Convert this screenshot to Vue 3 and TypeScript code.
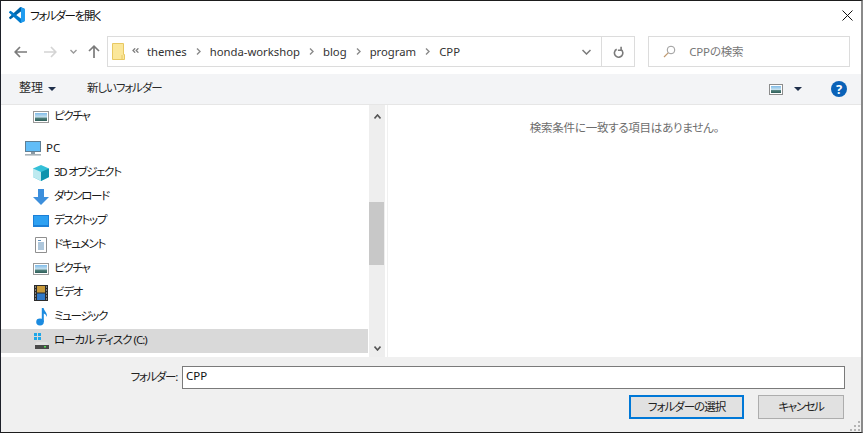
<script setup lang="ts">
const crumbs = ['themes', 'honda-workshop', 'blog', 'program', 'CPP']
</script>

<template>
  <div class="window">
    <header class="title">
      <svg class="logo" width="16" height="16" viewBox="0 0 100 100">
        <path fill="#0065A9" d="M96.4 10.8 75.8.9a6.2 6.2 0 0 0-7.1 1.2L1.3 63.6a4.2 4.2 0 0 0 0 6.2l5.5 5a4.2 4.2 0 0 0 5.3.2l81.2-61.6c2.7-2.1 6.6-.1 6.6 3.3v-.2a6.2 6.2 0 0 0-3.5-5.6z" />
        <path fill="#007ACC" d="M96.4 89.2 75.8 99.1a6.2 6.2 0 0 1-7.1-1.2L1.3 36.4a4.2 4.2 0 0 1 0-6.2l5.5-5a4.2 4.2 0 0 1 5.3-.2l81.2 61.6c2.7 2.1 6.6.1 6.6-3.3v.2a6.2 6.2 0 0 1-3.5 5.6z" />
        <path fill="#1F9CF0" d="M75.8 99.1a6.2 6.2 0 0 1-7.1-1.2c2.3 2.3 6.2.7 6.2-2.6V4.7c0-3.3-3.9-4.9-6.2-2.6a6.2 6.2 0 0 1 7.1-1.2l20.6 9.9a6.2 6.2 0 0 1 3.5 5.6v67.2a6.2 6.2 0 0 1-3.5 5.6z" />
      </svg>
      <span class="title-text">フォルダーを開く</span>
      <svg class="close" width="11" height="11" viewBox="0 0 11 11"><path d="M.5.5 10.5 10.5M10.5.5 .5 10.5" stroke="#111" stroke-width="1" fill="none" /></svg>
    </header>

    <nav class="nav">
      <div class="arrows">
        <svg width="13" height="12" viewBox="0 0 13 12"><path d="M6 1 1.2 6 6 11M1.5 6H13" stroke="#7b7b7b" stroke-width="1.7" fill="none" /></svg>
        <svg class="fwd" width="13" height="12" viewBox="0 0 13 12"><path d="M7 1 11.8 6 7 11M11.5 6H0" stroke="#d4d4d4" stroke-width="1.7" fill="none" /></svg>
        <svg class="down" width="7" height="5" viewBox="0 0 7 5"><path d="M.5 1 3.5 4 6.5 1" stroke="#9a9a9a" stroke-width="1.4" fill="none" /></svg>
        <svg class="up" width="12" height="13" viewBox="0 0 12 13"><path d="M1 6 6 1.2 11 6M6 1.5V13" stroke="#7b7b7b" stroke-width="1.7" fill="none" /></svg>
      </div>
      <div class="address">
        <svg class="folder" width="13" height="17" viewBox="0 0 13 17">
          <path d="M.5.5h11v11h1v5H.5z" fill="#fbe79a" stroke="#e8c862" />
          <path d="M10 12v5" stroke="#e8c862" />
        </svg>
        <svg class="more" width="7" height="5" viewBox="0 0 7 5"><path d="M3.2.3 1 2.5 3.2 4.7M6.4.3 4.2 2.5 6.4 4.7" stroke="#808080" stroke-width="1.3" fill="none" /></svg>
        <template v-for="(c, i) in crumbs" :key="c">
          <span class="crumb">{{ c }}</span>
          <svg v-if="i < crumbs.length - 1" class="sep" width="5" height="7" viewBox="0 0 5 7"><path d="M1 .5 4 3.5 1 6.5" stroke="#8a8a8a" stroke-width="1.4" fill="none" /></svg>
        </template>
        <svg class="chev" width="9" height="6" viewBox="0 0 9 6"><path d="M.5 1 4.5 5 8.5 1" stroke="#7a7a7a" stroke-width="1.5" fill="none" /></svg>
        <div class="refresh">
          <svg width="11" height="12" viewBox="0 0 11 12"><path d="M7.6 3.2A4.2 4.2 0 1 1 3.4 3M7.8.5v3.4H4.6" stroke="#7b7b7b" stroke-width="1.6" fill="none" transform="translate(0.3 .3)" /></svg>
        </div>
      </div>
      <div class="search">
        <svg width="13" height="13" viewBox="0 0 13 13"><circle cx="8" cy="5" r="3.8" stroke="#9a9a9a" fill="none" /><path d="M5.2 7.8 1 12" stroke="#c09a70" stroke-width="1.2" /></svg>
        <span>CPPの検索</span>
      </div>
    </nav>

    <div class="toolbar">
      <span class="organize">整理</span>
      <span class="caret"></span>
      <span class="newfolder">新しいフォルダー</span>
      <svg class="viewicon" width="14" height="11" viewBox="0 0 14 11">
        <defs>
          <linearGradient id="vg" x1="0" y1="0" x2="0" y2="1">
            <stop offset="0" stop-color="#7fbbe8" />
            <stop offset=".5" stop-color="#c5e0ee" />
            <stop offset=".65" stop-color="#4f7f7a" />
            <stop offset="1" stop-color="#2f5f5a" />
          </linearGradient>
        </defs>
        <rect x=".5" y=".5" width="13" height="10" fill="#fff" stroke="#8c8c8c" />
        <rect x="2" y="2" width="10" height="7" fill="url(#vg)" />
      </svg>
      <span class="caret viewcaret"></span>
      <span class="help">?</span>
    </div>

    <main class="panes">
      <aside class="tree">
        <div class="row sub">
          <svg class="ic" width="16" height="12" viewBox="0 0 16 12"><rect x=".5" y=".5" width="15" height="11" fill="#fff" stroke="#9a9a9a" /><rect x="2" y="2" width="12" height="8" fill="url(#vg)" /></svg>
          <span>ピクチャ</span>
        </div>
        <div class="row pc">
          <svg class="ic" width="16" height="16" viewBox="0 0 16 16"><rect x=".5" y=".5" width="15" height="10" fill="#62bdf7" stroke="#5f7f95" /><rect x="6" y="11" width="4" height="2" fill="#8a9aa5" /><rect y="13" width="16" height="1.6" fill="#a8b2b8" /></svg>
          <span>PC</span>
        </div>
        <div class="row sub">
          <svg class="ic" width="16" height="16" viewBox="0 0 16 16"><path d="M8 0 16 3.5V12L8 16 0 12V3.5z" fill="#35c0d8" /><path d="M0 3.5 8 7V16L0 12z" fill="#bdeaf0" /><path d="M8 7 16 3.5V12L8 16z" fill="#0f93ad" /></svg>
          <span>3D オブジェクト</span>
        </div>
        <div class="row sub">
          <svg class="ic" width="16" height="16" viewBox="0 0 16 16"><path d="M5 0H11V8H16L8 16 0 8H5z" fill="#3d8fdc" /></svg>
          <span>ダウンロード</span>
        </div>
        <div class="row sub">
          <svg class="ic" width="16" height="12" viewBox="0 0 16 12"><rect width="16" height="12" fill="#1c7fd6" /><rect x="1" y="1" width="14" height="9" fill="#2ea1f2" /></svg>
          <span>デスクトップ</span>
        </div>
        <div class="row sub">
          <svg class="ic" width="16" height="16" viewBox="0 0 16 16"><path d="M2.5.5H13.5V15.5H2.5z" fill="#fff" stroke="#8f8f8f" /><path d="M5 3.5h3M5 6h6M5 8h6M5 10h6M5 12h6" stroke="#5f8fb8" /></svg>
          <span>ドキュメント</span>
        </div>
        <div class="row sub">
          <svg class="ic" width="16" height="12" viewBox="0 0 16 12"><rect x=".5" y=".5" width="15" height="11" fill="#fff" stroke="#9a9a9a" /><rect x="2" y="2" width="12" height="8" fill="url(#vg)" /></svg>
          <span>ピクチャ</span>
        </div>
        <div class="row sub">
          <svg class="ic narrow" width="14" height="16" viewBox="0 0 14 16"><rect width="14" height="16" fill="#2b2b2b" /><rect x="3" y="1" width="8" height="6.5" fill="#c89a3a" /><rect x="3" y="8.5" width="8" height="6.5" fill="#2f78c8" /><path d="M1 2h1M1 5h1M1 8h1M1 11h1M1 14h1M12 2h1M12 5h1M12 8h1M12 11h1M12 14h1" stroke="#ddd" /></svg>
          <span>ビデオ</span>
        </div>
        <div class="row sub">
          <svg class="ic" width="16" height="18" viewBox="0 0 16 18"><ellipse cx="7" cy="14" rx="3.8" ry="3.4" fill="#1b8be0" /><path d="M8.8 14V0H10.6C11 3 14.5 4.6 14 9 13 7 12 6 10.8 5.6V14z" fill="#1b8be0" /></svg>
          <span>ミュージック</span>
        </div>
        <div class="row sub selected">
          <svg class="ic" width="16" height="16" viewBox="0 0 16 16">
            <path d="M1 0h3v3H1zM5 0h3v3H5zM1 4h3v3H1zM5 4h3v3H5z" fill="#1ea7e8" />
            <path d="M2 13 3.5 9H14L15.5 13z" fill="#e2e2e2" />
            <rect x="2" y="12" width="14" height="4" fill="#4a4a4a" />
            <rect x="11" y="13" width="2" height="1.5" fill="#52e052" />
          </svg>
          <span>ローカル ディスク (C:)</span>
        </div>
      </aside>

      <div class="scrollbar">
        <svg class="sb-btn" width="7" height="5" viewBox="0 0 7 5"><path d="M.5 4.5 3.5 1 6.5 4.5" stroke="#555" stroke-width="1.6" fill="none" /></svg>
        <div class="track"><div class="thumb"></div></div>
        <svg class="sb-btn" width="7" height="5" viewBox="0 0 7 5"><path d="M.5.5 3.5 4 6.5.5" stroke="#555" stroke-width="1.6" fill="none" /></svg>
      </div>

      <section class="content">検索条件に一致する項目はありません。</section>
    </main>

    <footer class="bottom">
      <div class="field">
        <label>フォルダー:</label>
        <div class="input">CPP</div>
      </div>
      <div class="buttons">
        <button class="btn primary">フォルダーの選択</button>
        <button class="btn cancel">キャンセル</button>
      </div>
      <svg class="grip" width="10" height="10" viewBox="0 0 10 10">
        <path d="M8 0h2v2H8zM4 4h2v2H4zM8 4h2v2H8zM0 8h2v2H0zM4 8h2v2H4zM8 8h2v2H8z" fill="#b4b4b4" />
      </svg>
    </footer>
  </div>
</template>

<style>
body { background: #1c1c1c; }
</style>

<style scoped>
.window {
  position: relative;
  box-sizing: border-box;
  width: 863px;
  height: 433px;
  display: flex;
  flex-direction: column;
  overflow: hidden;
  background: #fff;
  border-top: 1px solid #1d1d1d;
  border-left: 1px solid #1d2029;
  border-bottom: 1px solid #1d1d1d;
  border-right: 2px solid #8a8a8a;
  font-family: "Noto Sans", "Noto Sans CJK JP", sans-serif;
  font-size: 11.5px;
  font-feature-settings: "palt";
  color: #1a1a1a;
}
svg { display: block; flex: none; }

.title { height: 29px; display: flex; align-items: center; padding: 0 8px 0 8px; }
.logo { margin-top: -1px; }
.title-text { margin: -2px 0 0 5px; color: #111; letter-spacing: -1.3px; }
.close { margin-left: auto; }

.nav { height: 43px; display: flex; align-items: center; padding: 0 11px 1px 13px; }
.arrows { width: 93px; display: flex; align-items: center; }
.fwd { margin-left: 17px; }
.down { margin-left: 13px; margin-top: -1px; }
.up { margin-left: 11px; }
.address {
  box-sizing: border-box;
  width: 529px;
  height: 31px;
  border: 1px solid #dcdcdc;
  display: flex;
  align-items: center;
  padding-left: 4px;
  color: #333;
}
.folder { margin-right: 7px; }
.more { margin-right: 8px; margin-top: -2px; }
.crumb { white-space: nowrap; font-size: 11.3px; }
.sep { margin: 0 9px; }
.chev { margin-left: auto; margin-right: 10px; }
.refresh {
  width: 33px;
  height: 100%;
  box-sizing: border-box;
  border-left: 1px solid #dcdcdc;
  padding-left: 1px;
  display: flex;
  align-items: center;
  justify-content: center;
}
.search {
  box-sizing: border-box;
  margin-left: 13px;
  width: 202px;
  height: 31px;
  border: 1px solid #dcdcdc;
  display: flex;
  align-items: center;
  padding-left: 14px;
  gap: 13px;
  color: #777;
}
.search span { margin-top: -2px; letter-spacing: -0.2px; }

.toolbar {
  height: 30px;
  background: #f3f4f6;
  border-bottom: 1px solid #e6e6e6;
  display: flex;
  align-items: center;
  padding: 0 14px 0 18px;
  color: #2a2a2a;
}
.organize, .newfolder { margin-top: -4px; }
.organize { font-size: 12px; }
.caret {
  width: 0;
  height: 0;
  border-left: 4px solid transparent;
  border-right: 4px solid transparent;
  border-top: 4px solid #1f2f4a;
  margin-left: 5px;
}
.newfolder { margin-left: 31px; letter-spacing: -1.1px; }
.viewicon { margin-left: auto; }
.viewcaret { margin-left: 11px; }
.help {
  width: 16px;
  height: 16px;
  margin-left: 29px;
  border-radius: 50%;
  background: #0a62b8;
  color: #fff;
  font-weight: 700;
  font-size: 13px;
  line-height: 16px;
  text-align: center;
}

.panes { flex: 1; min-height: 0; display: flex; }
.tree { width: 367px; flex: none; overflow: hidden; }
.row { height: 24px; display: flex; align-items: center; white-space: nowrap; }
.row > span { margin-top: -4px; letter-spacing: -1.3px; }
.sub { padding-left: 32px; }
.sub .ic { margin-right: 5px; }
.sub .narrow { margin-left: 1px; margin-right: 6px; }
.pc { padding-left: 24px; margin-top: 8px; }
.pc .ic { margin-right: 5px; }
.row.pc > span { letter-spacing: 0; }
.selected { background: #d9d9d9; }
.row.selected > span { letter-spacing: -1px; }

.scrollbar {
  margin-left: 1px;
  width: 16px;
  flex: none;
  background: #eeeeee;
  display: flex;
  flex-direction: column;
  align-items: center;
  padding: 9px 0 6px;
  box-sizing: border-box;
}
.sb-btn { flex: none; }
.track { flex: 1; width: 100%; position: relative; }
.thumb { position: absolute; left: 0; top: 83px; width: 15px; height: 63px; background: #c8c8c8; }

.content {
  flex: 1;
  margin-left: 2px;
  border-left: 1px solid #f0f0f0;
  text-align: center;
  padding-top: 14px;
  color: #6d6d6d;
  line-height: 18px;
  letter-spacing: -0.25px;
}

.bottom {
  position: relative;
  height: 75px;
  flex: none;
  background: #f0f0f0;
  box-sizing: border-box;
  padding: 9px 16px 0 0;
}
.field { display: flex; align-items: center; justify-content: flex-end; }
label { margin: -3px 5px 0 0; color: #222; letter-spacing: -1.3px; }
.input {
  box-sizing: border-box;
  width: 663px;
  height: 23px;
  border: 1px solid #7a7a7a;
  background: #fff;
  padding-left: 3px;
  line-height: 18px;
  color: #111;
}
.buttons { display: flex; justify-content: flex-end; gap: 14px; margin-top: 6px; padding-right: 1px; }
.btn {
  box-sizing: border-box;
  height: 24px;
  background: #e1e1e1;
  font: inherit;
  font-feature-settings: "palt";
  color: #222;
  padding: 0 0 3px;
}
.primary { width: 115px; border: 2px solid #0078d7; letter-spacing: -1px; }
.cancel { width: 86px; border: 1px solid #adadad; letter-spacing: -1.4px; }
.grip { position: absolute; right: 1px; bottom: 1px; }
</style>
